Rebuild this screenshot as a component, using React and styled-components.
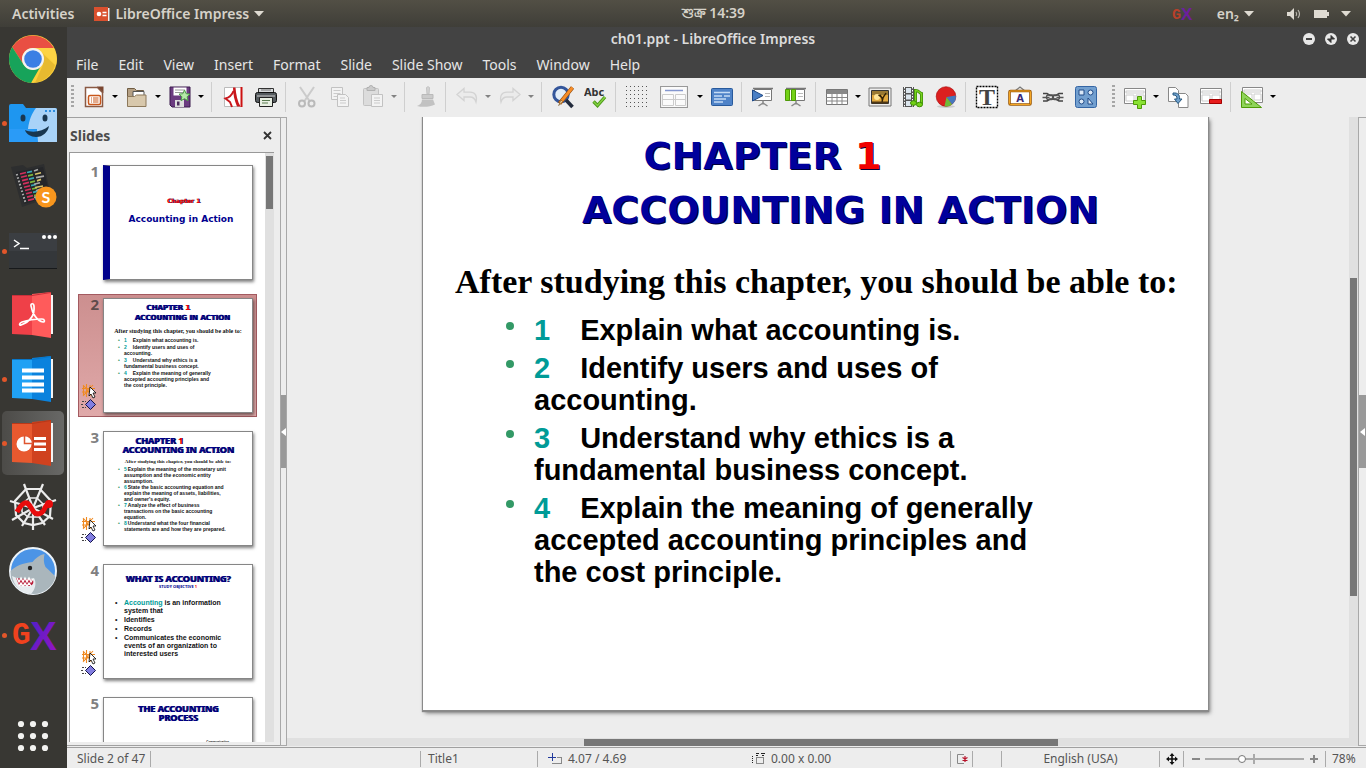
import React from "react";
import styled, { createGlobalStyle, css } from "styled-components";

const Global = createGlobalStyle`
  * { box-sizing: border-box; }
  body { margin: 0; font-family: "Noto Sans", sans-serif; font-size: 14px; overflow: hidden; }
  button { font: inherit; color: inherit; background: none; border: 0; padding: 0; margin: 0; }
  h1, h2, h3, p, ul { margin: 0; padding: 0; font-weight: inherit; font-size: inherit; }
  ul { list-style: none; }
  svg { display: block; flex: none; }
`;

/* ---------- frame ---------- */
const Desktop = styled.div`
  height: 100vh;
  display: flex;
  flex-direction: column;
  background: #373632;
`;
const TopBar = styled.header`
  flex: none;
  height: 27px;
  display: grid;
  grid-template-columns: 50% auto 1fr;
  align-items: center;
  background: linear-gradient(#524f45, #3f3e38);
  color: #d6d2c9;
  font-size: 14px;
  font-weight: 600;
  padding: 0 15px 0 12px;
`;
const TopGroup = styled.div`
  display: flex;
  align-items: center;
  gap: ${(p) => p.$gap}px;
  justify-content: ${(p) => (p.$end ? "flex-end" : "flex-start")};
`;
const TopButton = styled.button`
  display: flex;
  align-items: center;
  gap: 5px;
  height: 27px;
`;
const Work = styled.div`
  flex: 1;
  min-height: 0;
  display: flex;
`;
const Dock = styled.nav`
  flex: none;
  width: 67px;
  display: flex;
  flex-direction: column;
  background: #383733;
`;
const DockButton = styled.button`
  height: 64px;
  display: grid;
  grid-template-columns: 7px 48px 7px;
  align-items: center;
  border-radius: 5px;
  margin: 0 3px 0 2px;
  ${(p) => p.$active && css`background: linear-gradient(90deg, #4c4b48, #686866);`}
  &:last-child { margin-top: auto; }
`;
const Dot = styled.span`
  width: 5px;
  height: 5px;
  border-radius: 50%;
  background: ${(p) => (p.$on ? "#e2562a" : "transparent")};
`;
const Window = styled.main`
  flex: 1;
  min-width: 0;
  display: flex;
  flex-direction: column;
  background: #ededed;
`;
const TitleBar = styled.div`
  flex: none;
  height: 25px;
  display: grid;
  grid-template-columns: 1fr auto 1fr;
  align-items: center;
  background: #434343;
  color: #dcdcdc;
  font-size: 14px;
  font-weight: 600;
  padding: 0 7px 2px 0;
`;
const WindowButtons = styled.div`
  grid-column: 3;
  display: flex;
  justify-content: flex-end;
  gap: 10px;
`;
const TitleText = styled.h1`
  grid-column: 2;
`;
const MenuBar = styled.div`
  flex: none;
  height: 26px;
  display: flex;
  align-items: center;
  gap: 20px;
  padding: 0 0 2px 9px;
  background: #434343;
  color: #e6e6e6;
`;

/* ---------- toolbar ---------- */
const ToolBar = styled.div`
  flex: none;
  height: 39px;
  display: flex;
  align-items: center;
  padding-bottom: 2px;
  background: #ededed;
`;
const Tool = styled.button`
  width: ${(p) => (p.$wide ? 42 : 33)}px;
  height: 33px;
  flex: none;
  display: grid;
  place-items: center;
  opacity: ${(p) => (p.disabled ? 0.5 : 1)};
`;
const Arrow = styled.button`
  width: 10px;
  height: 33px;
  flex: none;
  display: grid;
  place-items: center;
  opacity: ${(p) => (p.disabled ? 0.45 : 1)};
  &::before {
    content: "";
    border: 3px solid transparent;
    border-top-color: #000;
    border-bottom: 0;
  }
`;
const Sep = styled.span`
  width: 1px;
  height: 30px;
  flex: none;
  margin: 0 4px 0 3px;
  background: #cfcfcf;
  ${Arrow} + & { margin-left: 5px; }
`;
const Grip = styled.span`
  width: 3px;
  height: 23px;
  flex: none;
  margin: 0 3px 0 4px;
  background: repeating-linear-gradient(#a6a6a6 0 2px, transparent 2px 4px);
  ${Tool} + & { margin-left: 10px; }
`;

/* ---------- main area ---------- */
const Main = styled.div`
  flex: 1;
  min-height: 0;
  display: flex;
  padding-bottom: 1px;
`;
const Panel = styled.aside`
  flex: none;
  width: 213px;
  display: flex;
  flex-direction: column;
  padding: 0 6px 3px 2px;
  border-top: 1px solid #a0a0a0;
  border-bottom: 1px solid #a0a0a0;
`;
const PanelHead = styled.div`
  flex: none;
  height: 34px;
  display: flex;
  align-items: center;
  justify-content: space-between;
  padding: 0 1px;
  font-weight: 700;
  color: #4c4c4c;
`;
const CloseButton = styled.button`
  width: 11px;
  height: 11px;
`;
const ListFrame = styled.div`
  flex: 1;
  min-height: 0;
  display: flex;
  border-top: 1px solid #999;
  border-left: 1px solid #999;
`;
const List = styled.ul`
  flex: 1;
  overflow: hidden;
  display: flex;
  flex-direction: column;
  gap: 10px;
  padding: 8px;
  background: #fff;
`;
const Item = styled.li`
  flex: none;
  height: 123px;
  display: grid;
  grid-template-columns: 20px 150px 4px;
  column-gap: 4px;
  padding-top: 3px;
  border: 1px solid ${(p) => (p.$on ? "#a35a60" : "transparent")};
  background: ${(p) => (p.$on ? "linear-gradient(#cc8f8f, #e0a9a9)" : "none")};
`;
const ItemSide = styled.div`
  display: flex;
  flex-direction: column;
  justify-content: space-between;
  align-items: flex-end;
  height: 115px;
  line-height: 13px;
  font-size: 15px;
  font-weight: 700;
  color: ${(p) => (p.$on ? "#5e4c4c" : "#808080")};
`;
const Thumb = styled.div`
  width: 150px;
  height: 115px;
  padding-top: ${(p) => p.$top}px;
  background: #fff;
  border: 1px solid #868686;
  border-left: ${(p) => (p.$bar ? "7px solid #00008b" : "1px solid #868686")};
  box-shadow: 1px 2px 3px rgba(0, 0, 0, 0.5);
  overflow: hidden;
  white-space: nowrap;
  color: #111;
  font-family: "Liberation Sans", sans-serif;
`;
const MiniTitle = styled.h3`
  font: 700 ${(p) => p.$size}px/${(p) => p.$line}px ${(p) => (p.$narrow ? '"Noto Sans"' : '"DejaVu Sans"')}, sans-serif;
  color: #00008f;
  text-align: center;
  padding-left: ${(p) => p.$shift || 0}px;
  padding-right: ${(p) => p.$back || 0}px;
  text-shadow: ${(p) => (p.$flat ? "none" : "1px 0 0 #000040")};
`;
const Red = styled.span`
  color: #f00000;
`;
const MiniLead = styled.p`
  font: 700 ${(p) => p.$size}px/${(p) => p.$line}px "Liberation Serif", serif;
  text-align: center;
  padding-top: ${(p) => p.$top || 0}px;
`;
const MiniNote = styled.p`
  padding: 18px 23px 0 0;
  font: 700 3px/4px "Liberation Sans", sans-serif;
  text-align: right;
`;
const MiniList = styled.ul`
  padding: ${(p) => p.$top}px 0 0 20px;
  font-size: ${(p) => p.$size}px;
  line-height: ${(p) => p.$line}px;
  font-weight: 700;
  display: grid;
  gap: ${(p) => p.$gap}px;
  li::before {
    content: "•";
    float: left;
    margin-left: -${(p) => p.$hang}px;
    color: ${(p) => p.$bullet};
  }
`;
const Teal = styled.span`
  color: #009b97;
  margin-right: ${(p) => p.$gap || 0}px;
`;
const Track = styled.div`
  flex: none;
  background: #e0e0e0;
  display: flex;
  ${(p) => (p.$flat
    ? css`height: 8px; padding: 1px 0 0 ${p.$start};`
    : css`width: 9px; flex-direction: column; padding: ${p.$start} 1px 0 1px;`)}
`;
const Grab = styled.div`
  background: #777;
  ${(p) => (p.$flat ? css`width: ${p.$size};` : css`height: ${p.$size};`)}
`;
const Splitter = styled.div`
  flex: none;
  width: ${(p) => p.$w}px;
  display: flex;
  align-items: center;
  border: 1px solid #a8a8a8;
  border-width: 1px ${(p) => (p.$last ? 0 : 1)}px 1px 1px;
`;
const SplitHandle = styled.button`
  width: 100%;
  height: 73px;
  background: #999;
  display: grid;
  place-items: center;
`;
const Editor = styled.section`
  flex: 1;
  min-width: 0;
  display: flex;
`;
const Stage = styled.div`
  flex: 1;
  min-width: 0;
  display: flex;
  flex-direction: column;
`;
const Canvas = styled.div`
  flex: 1;
  min-height: 0;
  overflow: hidden;
  display: flex;
  justify-content: center;
  padding: 0 5px 28px 0;
`;
const Page = styled.article`
  flex: none;
  width: 785px;
  background: #fff;
  box-shadow: 0 1px 1px 1px #8a8a8a, 2px 3px 4px rgba(0, 0, 0, 0.5);
  color: #000;
`;
const PageTitle = styled.h2`
  padding: 12px 0 0 50px;
  font: 700 38px/54px "DejaVu Sans", sans-serif;
  color: #00009c;
  text-shadow: 1px 1px 0 #000038;
  text-align: center;
`;
const TitleLine = styled.span`
  display: block;
  padding-right: ${(p) => p.$back || 0}px;
`;
const PageLead = styled.p`
  padding: 26px 0 0 32px;
  font: 700 34px/38px "Liberation Serif", serif;
`;
const Bullets = styled.ul`
  padding: 13px 0 0 111px;
  display: grid;
  gap: 6px;
  font: 700 29px/32px "Liberation Sans", sans-serif;
  li { position: relative; }
  li::before {
    content: "";
    position: absolute;
    left: -28px;
    top: 8px;
    width: 8px;
    height: 8px;
    border-radius: 50%;
    background: #339966;
  }
`;

/* ---------- status bar ---------- */
const StatusBar = styled.footer`
  flex: none;
  height: 21px;
  display: flex;
  align-items: center;
  padding-top: 1px;
  border-top: 1px solid #a0a0a0;
  font-size: 12px;
  color: #555;
`;
const Cell = styled.div`
  height: 16px;
  line-height: 16px;
  display: flex;
  align-items: center;
  justify-content: ${(p) => (p.$center ? "center" : "flex-start")};
  gap: 5px;
  padding-left: ${(p) => p.$pad || 0}px;
  border-right: ${(p) => (p.$open ? 0 : 1)}px solid #aaa;
  ${(p) => (p.$w ? css`flex: none; width: ${p.$w}px;` : css`flex: 1;`)}
`;
const Zoom = styled.input`
  appearance: none;
  flex: 1;
  min-width: 0;
  height: 10px;
  margin: 0;
  background:
    linear-gradient(#aaa, #aaa) 48px 0 / 2px 10px no-repeat,
    linear-gradient(#aaa, #aaa) 0 4px / 100% 2px no-repeat;
  &::-webkit-slider-thumb {
    appearance: none;
    width: 8px;
    height: 8px;
    border-radius: 50%;
    background: #fff;
    border: 1px solid #777;
  }
`;

/* ---------- drawings ---------- */
const Svg = ({ w = 24, h = 24, children, ...rest }) => (
  <svg width={w} height={h} viewBox={`0 0 ${w} ${h}`} fill="none" aria-hidden="true" {...rest}>{children}</svg>
);
const Caret = ({ c = "#dfdbd2" }) => <Svg w={10} h={6}><path d="M0 0h10L5 5.500z" fill={c} /></Svg>;

const tools = {
  New: <Svg><path d="M3.500 2.500h12l5 5v14h-17z" fill="#fff" stroke="#8a5a44" strokeWidth="1.500" /><path d="M15 1.500h6.500V8z" fill="#7a4630" /><rect x="6.500" y="10.500" width="12" height="9" rx="1.500" fill="#fff" stroke="#c9571b" strokeWidth="1.500" /><path d="M9 13h1m1 0h5.500M9 15h1m1 0h5.500M9 17h1m1 0h5.500" stroke="#c9571b" /></Svg>,
  Open: <Svg><path d="M2.500 20V3.500h7l2 2h7V20z" fill="#b5a084" stroke="#6f5c43" /><path d="M8 6.500h11v8H8z" fill="#fff" stroke="#555" /><path d="M2.500 21.500V11.500h7l2-1.500h9.500v11.500z" fill="#d8c8ac" stroke="#8d795b" /></Svg>,
  Save: <Svg><path d="M2 2h20v20H4l-2-2z" fill="#6b3b80" stroke="#3b1b4c" /><path d="M5.500 2.500h13v8h-13z" fill="#fff" /><path d="M7 5h10M7 7.500h10" stroke="#999" /><path d="M7 15h9v7H7z" fill="#ddd" /><path d="M9 16.500h2.500v4H9z" fill="#4b2b5c" /><path d="M16.500 5l1.600 3.700 3.900.4-2.900 2.700.9 3.900-3.500-2-3.500 2 .9-3.900-2.900-2.700 3.900-.4z" fill="#b6e9a9" stroke="#4c9c47" /></Svg>,
  Pdf: <Svg><path d="M3.500 2.500h17v19h-17z" fill="#fff" stroke="#bbb" /><path d="M20.500 2v20" stroke="#c11" strokeWidth="2" /><path d="M12 2.500h2.500c.5 7 2 14 5 19h-3.500c-2.500-6-4-12-4-19z" fill="#c9171c" /><path d="M12.500 6c-1.500 4-4 6.500-8 7.500l4.500 3.500 2 5" stroke="#c9171c" strokeWidth="2" /></Svg>,
  Print: <Svg><path d="M4.500 9V3.500h15V9z" fill="#d9dcde" stroke="#333" /><path d="M7 5h10" stroke="#777" /><rect x="1.500" y="7.500" width="21" height="10" rx="2" fill="#555b5f" stroke="#111" /><path d="M3 11h18" stroke="#ccc" /><path d="M5.500 12.500h13v9h-13z" fill="#e9f0e4" stroke="#222" /><path d="M8 15.500h8M8 18h6" stroke="#5a7a50" /></Svg>,
  Cut: <Svg><path d="M5 2l9.500 14M19 2L9.500 16" stroke="#aaa" strokeWidth="2" /><circle cx="7" cy="18.500" r="3" stroke="#888" strokeWidth="2" /><circle cx="16.500" cy="18.500" r="3" stroke="#888" strokeWidth="2" /></Svg>,
  Copy: <Svg><path d="M3.500 2.500h11v12h-11z" fill="#fafafa" stroke="#999" /><path d="M5.500 5.500h7m-7 3h7m-7 3h4" stroke="#aaa" /><path d="M9.500 9.500h8l3 3v9h-11z" fill="#fafafa" stroke="#999" /><path d="M12 13h5m-5 2.500h6m-6 2.500h6" stroke="#aaa" /></Svg>,
  Paste: <Svg><rect x="2.500" y="3.500" width="15" height="17" rx="1" fill="#ccc" stroke="#999" /><path d="M6 5.500v-3h2a2 2 0 014 0h2v3z" fill="#aaa" stroke="#777" /><path d="M10.500 9.500h11v12h-11z" fill="#fafafa" stroke="#999" /><path d="M13 13h6m-6 2.500h6m-6 2.500h6" stroke="#aaa" /></Svg>,
  Clone: <Svg><path d="M12.500 2.500a2 2 0 013 0l-.5 6.500h-2z" fill="#bbb" stroke="#999" /><path d="M8 9.500h11v4H8z" fill="#aaa" stroke="#888" /><path d="M8 14.500h11l2 5c-5 2.500-12 3-18 1.500 3-1 5-3 5-6.500z" fill="#999" /></Svg>,
  Undo: <Svg><path d="M2 9.500l7-6v3.700h6c5 0 7.500 3 6 9.800-1.200-3.800-3-5-6-5H9v3.500z" fill="#eaeaea" stroke="#bbb" strokeWidth="1.300" /></Svg>,
  Redo: <Svg><path d="M22 9.500l-7-6v3.700H9c-5 0-7.500 3-6 9.800 1.200-3.800 3-5 6-5h6v3.500z" fill="#eaeaea" stroke="#bbb" strokeWidth="1.300" /></Svg>,
  Find: <Svg><circle cx="10" cy="9.500" r="7.200" fill="#e2edf8" stroke="#34569b" strokeWidth="3" /><path d="M15 15l6.500 7" stroke="#222b3c" strokeWidth="3.600" /><path d="M21.500 2.500L8.500 18.500" stroke="#8b4a10" strokeWidth="4" /><path d="M21.500 2.500L9 18" stroke="#f78d28" strokeWidth="2.800" /><path d="M9.800 15l1.900 1.600-4 4z" fill="#f2d8a5" stroke="#6b4314" strokeWidth=".6" /></Svg>,
  Spell: <Svg><text x="0" y="11" fontFamily="Noto Sans" fontWeight="700" fontSize="11" fill="#333">Abc</text><path d="M9.500 16.500l4 4 7.500-8.500" stroke="#4c9a1a" strokeWidth="3.400" /><path d="M9.500 16.500l4 4 7.500-8.500" stroke="#85d142" strokeWidth="1.400" /></Svg>,
  Grid: <Svg>{[1, 5, 9, 13, 17, 21].flatMap((y) => [1, 5, 9, 13, 17, 21].map((x) => <path key={`${x}-${y}`} d={`M${x} ${y}h1v1h-1z`} fill="#555" />))}</Svg>,
  Layout: <Svg w={28}><path d="M.5 1.500h27v21H.5z" fill="#fbfbfb" stroke="#999" strokeWidth="1.200" /><path d="M5 5.500h18" stroke="#8497cf" strokeWidth="1.500" /><path d="M2.500 9.500h11v11h-11zm13 0h10v11h-10zm-13 5h23" stroke="#ccc" /></Svg>,
  Master: <Svg><rect x="1.500" y="3.500" width="21" height="17" rx="1" fill="#4f83c8" stroke="#285a9c" /><path d="M4 7.500h16M4 11h8m2 0h6M4 14h12M4 17h9" stroke="#c5dcf5" strokeWidth="1.300" /></Svg>,
  Show: <Svg><path d="M3.500 4.500h17v11h-17z" fill="#fff" stroke="#777" /><path d="M2 3.500h20" stroke="#777" strokeWidth="1.500" /><path d="M12 15.500v4m0-1.500l-4.500 3m4.500-3l4.500 3" stroke="#888" strokeWidth="1.500" /><path d="M14 8.500h5m-5 3h5" stroke="#bbb" /><path d="M1.500 5v11l10.500-5.500z" fill="#4a7fc5" stroke="#204a87" /></Svg>,
  ShowHere: <Svg><path d="M3.500 4.500h17v11h-17z" fill="#fff" stroke="#777" /><path d="M2 3.500h20" stroke="#777" strokeWidth="1.500" /><path d="M12 15.500v4m0-1.500l-4.500 3m4.500-3l4.500 3" stroke="#888" strokeWidth="1.500" /><path d="M14 8.500h5m-5 3h5" stroke="#bbb" /><path d="M1.500 4.500h4v11h-4zm6 0h4v11h-4z" fill="#73d216" stroke="#4e9a06" /></Svg>,
  Table: <Svg><path d="M1.500 4.500h21v15h-21z" fill="#fff" stroke="#777" /><path d="M2 5h20v3H2z" fill="#888" /><path d="M1.500 8.500h21m-21 4h21m-21 3.500h21M7 5v14.500m5-14.500v14.500M17 5v14.500" stroke="#888" /></Svg>,
  Image: <Svg><path d="M1 3h22v18H1z" fill="#eee" stroke="#777" /><path d="M3.500 5.500h17v13h-17z" fill="#e0a83e" stroke="#333" /><path d="M4 6h16v4H4z" fill="#6b5a2c" opacity=".6" /><circle cx="9" cy="12" r="3" fill="#ffe69a" /><path d="M14 18c1-4 0-5-2-8m2.500 5c0-3 2-4 3.500-7m-3.500 5l-4-3" stroke="#332204" strokeWidth="1.500" /><path d="M4 16.500h16v2H4z" fill="#4e3714" /></Svg>,
  Media: <Svg><path d="M2 2h11v20H2z" fill="#555" /><path d="M5 3h5v5H5zm0 6.500h5v5H5zM5 16h5v5H5z" fill="#dce6ee" /><path d="M3.500 2v20m8-20v20" stroke="#fff" strokeDasharray="1.500 1.500" /><path d="M14.500 17.500v-12c4 0 3 2 6 3v11" stroke="#3d8a06" strokeWidth="3" /><path d="M14.500 17.500v-12c4 0 3 2 6 3v11" stroke="#79d321" strokeWidth="1.500" /><ellipse cx="12.500" cy="18" rx="3" ry="2.300" fill="#73d216" stroke="#3d8a06" /><ellipse cx="18.500" cy="19.500" rx="3" ry="2.300" fill="#73d216" stroke="#3d8a06" /></Svg>,
  Chart: <Svg><ellipse cx="12" cy="21.500" rx="9" ry="1.500" fill="#ccc" /><circle cx="12" cy="11.500" r="9.800" fill="#dc1f1f" stroke="#a40000" strokeWidth=".6" /><path d="M12.500 12l9.300-1.500c.5 4-1 7-3.800 9z" fill="#4678bd" /><path d="M12.500 12l5.500 7.500c-2 1.700-5 2.300-7.500 1.800z" fill="#6fbb3a" /></Svg>,
  Text: <Svg><path d="M1.500 1.500h21v21h-21z" fill="#fff" stroke="#000" strokeWidth="1.400" strokeDasharray="2 1" /><text x="12" y="20" textAnchor="middle" fontFamily="Liberation Serif" fontWeight="700" fontSize="24" fill="#444">T</text></Svg>,
  Fontwork: <Svg><path d="M7 6l5-4 5 4" stroke="#777" strokeWidth="1.200" /><rect x="1.500" y="6" width="21" height="13.500" rx="1" fill="#fff" stroke="#9c5a08" strokeWidth="2.600" /><rect x="1.500" y="6" width="21" height="13.500" rx="1" stroke="#f5a623" /><text x="12" y="16.500" textAnchor="middle" fontFamily="DejaVu Sans" fontWeight="700" fontSize="10" fill="#3a2a78">A</text></Svg>,
  Link: <Svg><path d="M2 8.500h4l3 2h6l3-2h4M2 16h4l3-2h6l3 2h4" stroke="#444" strokeWidth="1.600" /><path d="M1.500 12.500h7m7 0h7" stroke="#555" strokeWidth="1.300" /><rect x="5.500" y="10" width="7" height="4.500" rx="2" stroke="#555" strokeWidth="1.300" /><rect x="11.500" y="10" width="7" height="4.500" rx="2" stroke="#555" strokeWidth="1.300" /></Svg>,
  Shapes: <Svg><rect x="1.500" y="1.500" width="21" height="21" rx="2" fill="#729fcf" stroke="#3465a4" /><path d="M5 5h5v5H5zM14 19v-6l5 6z" fill="#dbe8f6" stroke="#204a87" /><circle cx="16.500" cy="7.500" r="2.500" fill="#dbe8f6" stroke="#204a87" /><circle cx="7.500" cy="16.500" r="2.500" fill="#dbe8f6" stroke="#204a87" /></Svg>,
  AddSlide: <Svg><path d="M1.500 3.500h21v15h-21z" fill="#fff" stroke="#888" /><path d="M3 6h18v2H3zm0 4h8v6H3zm10 0h8v6h-8z" stroke="#ccc" /><path d="M14.500 11.500h4v4h4v4h-4v4h-4v-4h-4v-4h4z" fill="#8ae234" stroke="#4e9a06" /></Svg>,
  DupSlide: <Svg><path d="M2.500 2.500h7l3 3v11h-10z" fill="#fff" stroke="#888" /><path d="M12.500 8.500h7l2.500 2.500v11.500h-9.500z" fill="#fff" stroke="#888" /><path d="M7 8c5-.5 7 2 6.500 6h2.500l-4 4.500L8.500 14H11c0-3-1-4-4-4z" fill="#6f9fca" stroke="#285a82" /></Svg>,
  DelSlide: <Svg><path d="M1.500 3.500h21v15h-21z" fill="#fff" stroke="#888" /><path d="M3 6h18v2H3zm0 4h8v6H3zm10 0h8v6h-8z" stroke="#ccc" /><path d="M10.500 14.500h12v4h-12z" fill="#e81c1c" stroke="#a40000" /></Svg>,
  Draw: <Svg><path d="M2.500 2.500h20v15h-20z" fill="#fff" stroke="#888" /><path d="M4 5h17v2H4zm0 4h8v6H4zm10 0h7v6h-7z" stroke="#ccc" /><path d="M1.500 6.500v16h20z" fill="#8fd45a" stroke="#4e9a06" /><path d="M5 13.500v5.500h7z" fill="#fff" stroke="#4e9a06" /></Svg>,
};

const Book = ({ from, mid, to, children }) => (
  <Svg w={48} h={48}>
    <path d="M41 4h3v39h-3z" fill="#f4f4f4" />
    <path d="M3 4h20v40L3 43z" fill={from} />
    <path d="M23 3l19-2v46l-19-3z" fill={to} />
    <path d="M3 4h20l19-3v1L23 5H3z" fill={mid} />
    {children}
  </Svg>
);
const dockArt = {
  Chrome: <Svg w={48} h={48}><circle cx="24" cy="24" r="24" fill="#fdd03b" /><path d="M3.200 12A24 24 0 0144.800 13H24a11 11 0 00-9.500 16.500z" fill="#e94f43" /><path d="M3.200 12A24 24 0 0022 47.900l9.500-16.400A11 11 0 0114.500 29.500z" fill="#17a35a" /><path d="M33 18l13 12c-2 8-9 16-20 17.800l8-18z" fill="#e7ba30" /><path d="M24 13h20.800A24 24 0 0147 30L34.500 18z" fill="#fdd344" /><circle cx="24" cy="24" r="11" fill="#f3f3f3" /><circle cx="24" cy="24" r="8.800" fill="#3b7fe4" /></Svg>,
  Files: <Svg w={48} h={48}><path d="M0 7a2 2 0 012-2h12l3 4h29a2 2 0 012 2v32H0z" fill="#1e96f0" /><path d="M27 9h19a2 2 0 012 2v32H29c-1-5-1-9-1-13h-9c1-9 4-16 8-21z" fill="#a9d3f8" /><path d="M0 30h19l9 1 1 12H0z" fill="#2f9dfa" opacity=".7" /><ellipse cx="14" cy="19" rx="2.500" ry="3.500" fill="#193750" /><ellipse cx="36" cy="19" rx="2.500" ry="3.500" fill="#193750" /><path d="M16 31c7 3 17 2 24-4-1 6-6 11-13 11-5 0-10-3-11-7z" fill="#193750" /><path d="M36 12h2m2 0h2m2 0h2" stroke="#2d8ee0" strokeWidth="2" /></Svg>,
  Sublime: <Svg w={48} h={48}><path d="M2 4l12-2 4 3 17-4 7 33-29 10z" fill="#2d2e2f" /><path d="M7 9l27-5 7 29-26 8z" fill="#252629" />{[0, 1, 2, 3, 4, 5, 6, 7, 8].map((n) => <g key={n} strokeWidth="1.700"><path d={`M${7 + n} ${12 + n * 3.300}l2-.5`} stroke="#aaa" /><path d={`M${11 + n} ${11 + n * 3.300}l6-1.500`} stroke="#d32f5d" /><path d={`M${18 + n} ${9.500 + n * 3.300}l5-1.200`} stroke={n % 2 ? "#7eb63a" : "#3aa6b5"} /><path d={`M${25 + (n % 4)} ${8 + n * 3.300}l${4 + (n % 3) * 2}-1.500`} stroke={n % 2 ? "#d8c36a" : "#aaa"} /></g>)}<circle cx="37" cy="34" r="10.500" fill="#f8961e" /><text x="37" y="40" textAnchor="middle" fontFamily="Lato" fontWeight="700" fontSize="16" fill="#fff">S</text></Svg>,
  Terminal: <Svg w={48} h={48}><path d="M0 6h48v36H0z" fill="#3b3e42" /><path d="M0 24h48v17H0z" fill="#34373a" /><path d="M0 41h48v1H0z" fill="#17191b" /><path d="M5 13l5 3.500L5 20M11 21.500h9" stroke="#fff" strokeWidth="1.500" /><circle cx="35" cy="10" r="2" fill="#fff" /><circle cx="40.500" cy="10" r="2" fill="#fff" /><circle cx="46" cy="10" r="2" fill="#fff" /></Svg>,
  Acrobat: <Book from="#ef4048" mid="#c9303a" to="#ff5b5b"><path d="M12 34c8-3 14-9 13-19-.3-3-3.500-3-3 0 1 7 6 15 12 16 2 .3 2-3-1-3-7 0-14 1-20 3-3 1-3 4-1 3z" stroke="#fff" strokeWidth="1.700" /></Book>,
  Writer: <Book from="#20a1f4" mid="#0877c9" to="#0a82dd"><path d="M13 15.500h22M13 22.500h22M13 29.500h22M13 35.500h22" stroke="#fff" strokeWidth="4" /></Book>,
  Impress: <Book from="#e8592f" mid="#b83818" to="#d0421f"><circle cx="15" cy="25" r="7.500" fill="#fff" /><path d="M15.500 24.500v-8a8 8 0 018 8z" fill="#fff" stroke="#df5530" strokeWidth="1.500" /><path d="M25 19.500h12M25 25h12M25 30.500h12" stroke="#fff" strokeWidth="3" /></Book>,
  Web: <Svg w={48} h={48}><g stroke="#ececec" strokeWidth="2.200"><path d="M15 1l9 24L34 1M1 18l23 7 23-8M3 37l21-12 20 11M24 25v22M24 25L13 43M24 25l12 17" /><path d="M17 6h14l11 12-1 15-8 7-9 2-9-2-8-8-1-14z" /><path d="M20 15h8l6 6v8l-5 5h-10l-6-5v-8z" strokeWidth="1.600" /></g><path d="M8 29c5-9 9-12 13-6 3 5 5 10 11 7 5-3 3-8 8-9" stroke="#e90b0b" strokeWidth="5" /><circle cx="40" cy="21" r="4" fill="#e90b0b" /></Svg>,
  Shark: <Svg w={48} h={48}><circle cx="24" cy="24" r="23" fill="#4b94e6" stroke="#edf3f8" strokeWidth="2" /><path d="M1.500 24c5-5 12-8 22-9 3-4 7-7 12-8-1 5-1 9 1 13 4 4 8 7 10 10a23 23 0 01-22 17C14 46 5 40 2 31z" fill="#aab6bc" /><path d="M3 29c8 4 15 4 22 2 3 5 1 12-3 16C11 45 5 39 3 29z" fill="#e7ecef" /><path d="M7 31l17 2c1 3 0 5-3 6l-11-1z" fill="#b91e3a" /><path d="M8 31l2 4 2-4 2 4 2-4 2 4 2-4 2 4 2-3M10 39l2-3 2 3 2-3 2 3 2-3 2 3" stroke="#fff" strokeWidth="1.300" /><circle cx="21" cy="21" r="2.200" fill="#222" /></Svg>,
  Gx: <Svg w={48} h={48}><defs><linearGradient id="gx" x1="0" y1="0" x2="1" y2="1"><stop offset="0" stopColor="#4a20c8" /><stop offset="1" stopColor="#9a14c4" /></linearGradient></defs><text x="3" y="33" fontFamily="Liberation Mono" fontSize="31" fontWeight="700" fill="#f0421e">G</text><text x="21" y="39" fontFamily="Liberation Sans" fontSize="40" fontWeight="700" fill="url(#gx)">X</text></Svg>,
  Apps: <Svg w={48} h={48}>{[12, 24, 36].flatMap((y) => [12, 24, 36].map((x) => <circle key={`${x}-${y}`} cx={x} cy={y} r="3.100" fill="#f2f2f0" />))}</Svg>,
};
const dock = [
  ["Chrome", 0], ["Files", 1], ["Sublime", 0], ["Terminal", 1], ["Acrobat", 0],
  ["Writer", 1], ["Impress", 1], ["Web", 0], ["Shark", 0], ["Gx", 1], ["Apps", 0],
];

/* "v" adds a drop-down arrow, "-" disables, "|" and ":" are a separator and a grip */
const toolRow = [
  ":", "New v", "Open v", "Save v", "|", "Pdf", "Print", "|", "Cut -", "Copy -", "Paste v-", "|", "Clone -", "|",
  "Undo v-", "Redo v-", "|", "Find", "Spell", "|", "Grid", "Layout v", "Master", "|", "Show", "ShowHere", "|",
  "Table v", "Image", "Media", "Chart", "|", "Text", "Fontwork", "Link", "Shapes", ":", "AddSlide v", "DupSlide",
  "DelSlide", "|", "Draw v",
];
const menus = ["File", "Edit", "View", "Insert", "Format", "Slide", "Slide Show", "Tools", "Window", "Help"];

const Effects = () => (
  <Svg w={18} h={30}>
    <path d="M5.500 1v13M9 2v11M2.500 3v9M1 5.500h13M1 9h12M2 2l10 11M2 13L12 2" stroke="#ef8a22" strokeWidth="1.100" />
    <path d="M9 4l6 6h-3l2 4-2 1-2-4-2 2z" fill="#fff" stroke="#000" strokeWidth=".8" />
    <path d="M9.500 16.500l5 5-5 5-5-5z" fill="#827ee0" stroke="#111148" />
    <path d="M1 18.500h4M0 21.500h3M1 24.500h4" stroke="#444" strokeDasharray="2 1" />
  </Svg>
);
const SlideItem = ({ n, on, fx, children, ...thumb }) => (
  <Item $on={on}>
    <ItemSide $on={on}><span>{n}</span>{fx && <Effects />}</ItemSide>
    <Thumb {...thumb}>{children}</Thumb>
  </Item>
);
const Handle = () => <SplitHandle aria-label="Toggle pane"><Svg w={5} h={8}><path d="M5 0v8L0 4z" fill="#fff" /></Svg></SplitHandle>;

export default function App() {
  return (
    <Desktop>
      <Global />
      <TopBar>
        <TopGroup $gap={20}>
          <TopButton>Activities</TopButton>
          <TopButton>
            <Svg w={16} h={16}><path d="M0 1h14v14H0z" fill="#d9502e" /><path d="M14 2h1.500v13H14z" fill="#eee" /><circle cx="5" cy="8" r="2.300" fill="#fff" /><path d="M8.500 6.500h4m-4 3h4" stroke="#fff" strokeWidth="1.300" /></Svg>
            LibreOffice Impress <Caret />
          </TopButton>
        </TopGroup>
        <TopButton>শুক্র 14:39</TopButton>
        <TopGroup $gap={24} $end>
          <Svg w={22} h={20}><text x="1" y="15" fontFamily="Liberation Mono" fontSize="15" fontWeight="700" fill="#b8402a">G</text><text x="10" y="16" fontFamily="Liberation Sans" fontSize="17" fontWeight="700" fill="#6d1f9e">X</text></Svg>
          <TopGroup $gap={32}>
            <TopButton>en₂ <Caret /></TopButton>
            <TopGroup $gap={12}>
              <Svg w={16} h={14}><path d="M1 5h3l4-4v12L4 9H1z" fill="#dfdbd2" /><path d="M10 5q1.500 2 0 4M12 3q3 4 0 8" stroke="#bbb8af" strokeWidth="1.200" /></Svg>
              <Svg w={15} h={8}><path d="M0 0h13v2h2v4h-2v2H0z" fill="#dfdbd2" /></Svg>
              <Caret />
            </TopGroup>
          </TopGroup>
        </TopGroup>
      </TopBar>
      <Work>
        <Dock>
          {dock.map(([name, run]) => (
            <DockButton key={name} aria-label={name} $active={name === "Impress"}>
              <Dot $on={run} />{dockArt[name]}
            </DockButton>
          ))}
        </Dock>
        <Window>
          <TitleBar>
            <TitleText>ch01.ppt - LibreOffice Impress</TitleText>
            <WindowButtons>
              <button aria-label="Minimize"><Svg w={12} h={12}><circle cx="6" cy="6" r="6" fill="#e8e8e8" /><path d="M3 6h6" stroke="#444" strokeWidth="2" /></Svg></button>
              <button aria-label="Restore"><Svg w={12} h={12}><circle cx="6" cy="6" r="6" fill="#e8e8e8" /><path d="M6 2.500v3.500H9.500zM6 9.500V6H2.500z" fill="#333" stroke="#333" /></Svg></button>
              <button aria-label="Close"><Svg w={12} h={12}><circle cx="6" cy="6" r="6" fill="#e8e8e8" /><path d="M3.500 3.500l5 5m0-5l-5 5" stroke="#444" strokeWidth="1.600" /></Svg></button>
            </WindowButtons>
          </TitleBar>
          <MenuBar>{menus.map((m) => <button key={m}>{m}</button>)}</MenuBar>
          <ToolBar>
            {toolRow.map((t, i) => {
              if (t === "|") return <Sep key={i} />;
              if (t === ":") return <Grip key={i} />;
              const [name, flags = ""] = t.split(" ");
              const off = flags.includes("-");
              return (
                <React.Fragment key={i}>
                  <Tool aria-label={name} $wide={name === "Layout"} disabled={off}>{tools[name]}</Tool>
                  {flags.includes("v") && <Arrow aria-label={`${name} options`} disabled={off} />}
                </React.Fragment>
              );
            })}
          </ToolBar>
          <Main>
            <Panel>
              <PanelHead>
                <span>Slides</span>
                <CloseButton aria-label="Close panel"><Svg w={11} h={11}><path d="M2 2l7 7m0-7L2 9" stroke="#333" strokeWidth="1.800" /></Svg></CloseButton>
              </PanelHead>
              <ListFrame>
                <List>
                  <SlideItem n="1" $top={30} $bar>
                    <MiniTitle $size={6} $line={9} $shift={5}><Red>Chapter 1</Red></MiniTitle>
                    <MiniTitle $size={9} $line={28} $shift={0} $flat>Accounting in Action</MiniTitle>
                  </SlideItem>
                  <SlideItem n="2" on fx $top={4}>
                    <MiniTitle $size={7} $line={10} $back={20}>CHAPTER <Red>1</Red></MiniTitle>
                    <MiniTitle $size={7} $line={10} $shift={8}>ACCOUNTING IN ACTION</MiniTitle>
                    <MiniLead $size={6} $line={8} $top={4}>After studying this chapter, you should be able to:</MiniLead>
                    <MiniList $size={5} $line={6} $gap={1} $top={2} $hang={6} $bullet="#396">
                      <li><Teal $gap={6}>1</Teal>Explain what accounting is.</li>
                      <li><Teal $gap={6}>2</Teal>Identify users and uses of<br />accounting.</li>
                      <li><Teal $gap={6}>3</Teal>Understand why ethics is a<br />fundamental business concept.</li>
                      <li><Teal $gap={6}>4</Teal>Explain the meaning of generally<br />accepted accounting principles and<br />the cost principle.</li>
                    </MiniList>
                  </SlideItem>
                  <SlideItem n="3" fx $top={4}>
                    <MiniTitle $size={9} $line={9} $back={38} $narrow>CHAPTER <Red>1</Red></MiniTitle>
                    <MiniTitle $size={9} $line={9} $narrow>ACCOUNTING IN ACTION</MiniTitle>
                    <MiniLead $size={5} $line={6} $top={5}>After studying this chapter, you should be able to:</MiniLead>
                    <MiniList $size={5} $line={6} $gap={0} $top={1} $hang={6} $bullet="#396">
                      <li><Teal $gap={1}>5</Teal>Explain the meaning of the monetary unit<br />assumption and the economic entity<br />assumption.</li>
                      <li><Teal $gap={1}>6</Teal>State the basic accounting equation and<br />explain the meaning of assets, liabilities,<br />and owner's equity.</li>
                      <li><Teal $gap={1}>7</Teal>Analyze the effect of business<br />transactions on the basic accounting<br />equation.</li>
                      <li><Teal $gap={1}>8</Teal>Understand what the four financial<br />statements are and how they are prepared.</li>
                    </MiniList>
                  </SlideItem>
                  <SlideItem n="4" fx $top={9}>
                    <MiniTitle $size={9} $line={10} $narrow>WHAT IS ACCOUNTING?</MiniTitle>
                    <MiniTitle as="p" $size={4} $line={6} $narrow $flat>STUDY OBJECTIVE <Red>1</Red></MiniTitle>
                    <MiniList $size={7} $line={8} $gap={1} $top={9} $hang={9} $bullet="#222">
                      <li><Teal>Accounting</Teal> is an information<br />system that</li>
                      <li>Identifies</li>
                      <li>Records</li>
                      <li>Communicates the economic<br />events of an organization to<br />interested users</li>
                    </MiniList>
                  </SlideItem>
                  <SlideItem n="5" $top={6}>
                    <MiniTitle $size={9} $line={9} $narrow>THE ACCOUNTING<br />PROCESS</MiniTitle>
                    <MiniNote>Communication</MiniNote>
                  </SlideItem>
                </List>
                <Track $start="3px"><Grab $size="53px" /></Track>
              </ListFrame>
            </Panel>
            <Splitter $w={7}><Handle /></Splitter>
            <Editor>
              <Stage>
                <Canvas>
                  <Page>
                    <PageTitle>
                      <TitleLine $back={156}>CHAPTER <Red>1</Red></TitleLine>
                      <TitleLine>ACCOUNTING IN ACTION</TitleLine>
                    </PageTitle>
                    <PageLead>After studying this chapter, you should be able to:</PageLead>
                    <Bullets>
                      <li><Teal $gap={30}>1</Teal>Explain what accounting is.</li>
                      <li><Teal $gap={30}>2</Teal>Identify users and uses of<br />accounting.</li>
                      <li><Teal $gap={30}>3</Teal>Understand why ethics is a<br />fundamental business concept.</li>
                      <li><Teal $gap={30}>4</Teal>Explain the meaning of generally<br />accepted accounting principles and<br />the cost principle.</li>
                    </Bullets>
                  </Page>
                </Canvas>
                <Track $flat $start="28%"><Grab $flat $size="62%" /></Track>
              </Stage>
              <Track $start="161px"><Grab $size="318px" /></Track>
            </Editor>
            <Splitter $w={8} $last><Handle /></Splitter>
          </Main>
          <StatusBar>
            <Cell $w={84} $pad={10}>Slide 2 of 47</Cell>
            <Cell />
            <Cell $w={117} $pad={7}>Title1</Cell>
            <Cell $w={203} $pad={10} $open>
              <Svg w={15} h={12}><path d="M0 4.500h8M4.500 0v8" stroke="#223a9c" /><path d="M4.500 10.500h9v-6h-5" stroke="#222" strokeDasharray="1 1" /></Svg>4.07 / 4.69
            </Cell>
            <Cell $w={210} $pad={10}>
              <Svg w={15} h={12}><path d="M1.500 3v8M5.500 4.500h7v6h-7z" stroke="#222" strokeDasharray="1 1" /><path d="M5 .5h3M10 .5h4M5 2.500h2m4 0h2" stroke="#222" /></Svg>0.00 x 0.00
            </Cell>
            <Cell $w={22} $center>
              <Svg w={12} h={12}><path d="M8 1.500H1.500v9H8" stroke="#888" /><path d="M9 3v6M6.500 4.500l5 3m0-3l-5 3" stroke="#b8122a" strokeWidth="1.200" /></Svg>
            </Cell>
            <Cell $w={29} />
            <Cell $w={158} $center>English (USA)</Cell>
            <Cell $w={24} $center>
              <Svg w={12} h={12}><path d="M6 1v10M1 6h10" stroke="#111" strokeWidth="1.600" /><path d="M6 0l2.500 3h-5zM6 12l2.500-3h-5zM0 6l3-2.500v5zM12 6L9 3.500v5z" fill="#111" /></Svg>
            </Cell>
            <Cell $w={142} $pad={8}>
              <button aria-label="Zoom out"><Svg w={8} h={8}><path d="M0 4h8" stroke="#888" strokeWidth="2" /></Svg></button>
              <Zoom type="range" aria-label="Zoom" min="0" max="100" defaultValue="36" />
              <button aria-label="Zoom in"><Svg w={16} h={8}><path d="M1 4h8M5 0v8" stroke="#888" strokeWidth="2" /></Svg></button>
            </Cell>
            <Cell $w={40} $pad={6} $open>78%</Cell>
          </StatusBar>
        </Window>
      </Work>
    </Desktop>
  );
}
